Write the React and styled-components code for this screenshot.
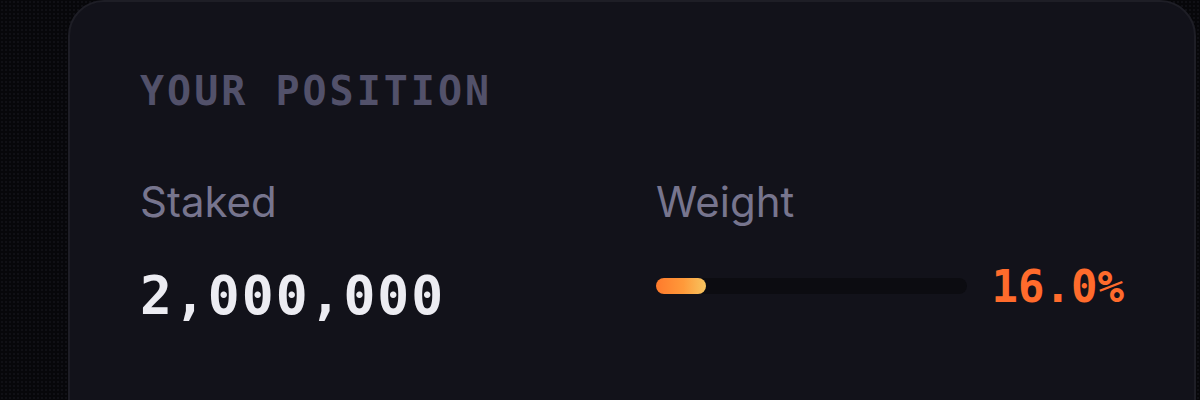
import styled, { createGlobalStyle } from 'styled-components';

const GlobalStyle = createGlobalStyle`
  html, body {
    margin: 0;
    padding: 0;
    background: #07070a;
  }
  body {
    font-family: Inter, "Noto Sans", sans-serif;
    overflow: hidden;
  }
`;

const Page = styled.div`
  height: 400px;
  overflow: hidden;
  padding: 0 4px 0 68px;
  background-color: #07070a;
  background-image: radial-gradient(#101015 1px, transparent 1px);
  background-size: 4px 4px;
`;

const Card = styled.section`
  box-sizing: border-box;
  min-height: 460px;
  padding: 69px 70px 0 70px;
  background: #12121a;
  border: 2px solid #1e1e26;
  border-radius: 36px;
`;

const Heading = styled.h2`
  margin: 0;
  font-family: "DejaVu Sans Mono", "Liberation Mono", monospace;
  font-weight: 700;
  font-size: 40px;
  line-height: 1;
  letter-spacing: 3px;
  color: #52516a;
`;

const Grid = styled.div`
  display: grid;
  grid-template-columns: 1fr 1fr;
  column-gap: 48px;
  margin-top: 70px;
`;

const Column = styled.div`
  display: flex;
  flex-direction: column;
  gap: ${props => props.gap}px;
`;

const Label = styled.span`
  font-family: Inter, "Noto Sans", sans-serif;
  font-weight: 400;
  font-size: 42px;
  line-height: 1;
  color: #77758e;
`;

const BigValue = styled.span`
  font-family: "DejaVu Sans Mono", "Liberation Mono", monospace;
  font-weight: 700;
  font-size: 53px;
  line-height: 1;
  letter-spacing: 2px;
  color: #ececf2;
`;

const WeightRow = styled.div`
  display: flex;
  align-items: center;
  gap: 25px;
  height: 44px;
`;

const Track = styled.div`
  flex: 1;
  height: 16px;
  border-radius: 8px;
  background: #0c0c11;
  margin-top: -3px;
`;

const Fill = styled.div`
  height: 100%;
  border-radius: 8px;
  background: linear-gradient(90deg, #ff7a2c 0%, #ff9a3a 55%, #f7c560 100%);
`;

const Percent = styled.span`
  font-family: "DejaVu Sans Mono", "Liberation Mono", monospace;
  font-weight: 700;
  font-size: 44px;
  line-height: 1;
  color: #ff6b2c;
`;

const weight = 16.0;

const App = () => {
  return (
    <>
      <GlobalStyle />
      <Page>
        <Card>
          <Heading>YOUR POSITION</Heading>
          <Grid>
            <Column gap={46}>
              <Label>Staked</Label>
              <BigValue>2,000,000</BigValue>
            </Column>
            <Column gap={42}>
              <Label>Weight</Label>
              <WeightRow>
                <Track>
                  <Fill style={{ width: `${weight}%` }} />
                </Track>
                <Percent>{weight.toFixed(1)}%</Percent>
              </WeightRow>
            </Column>
          </Grid>
        </Card>
      </Page>
    </>
  );
};

export default App;
